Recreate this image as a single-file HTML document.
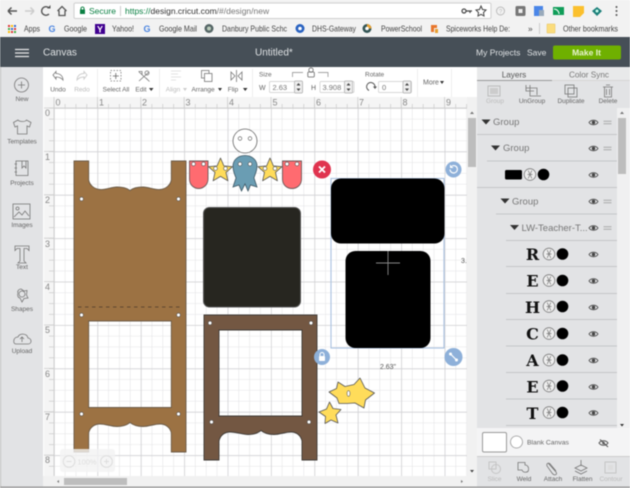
<!DOCTYPE html>
<html><head><meta charset="utf-8"><style>
html,body{margin:0;padding:0;background:#fff;width:630px;height:488px;overflow:hidden}
svg{display:block;font-family:"Liberation Sans",sans-serif;filter:blur(.5px)}
.i{fill:none;stroke:#777;stroke-width:.8}
.t{fill:#666;font-size:6.5px;text-anchor:middle}
.d{fill:#bbb;font-size:6.5px;text-anchor:middle}
.bm{fill:#444;font-size:8.3px}
.r{fill:#888;font-size:9px}
.g{fill:#777;font-size:9.5px}
.L{font-family:"DejaVu Serif",serif;font-weight:bold;font-size:16px;fill:#111;text-anchor:middle}
</style></head><body>
<svg width="630" height="488" viewBox="0 0 630 488" xmlns="http://www.w3.org/2000/svg">
<defs>
<pattern id="mn" width="10.85" height="10.85" patternUnits="userSpaceOnUse" patternTransform="translate(54 108)"><path d="M0 0H10.85M0 0V10.85" stroke="#e3e3e5" stroke-width="1.1" fill="none"/></pattern>
<pattern id="mj" width="43.4" height="43.4" patternUnits="userSpaceOnUse" patternTransform="translate(54 108)"><path d="M0 0H43.4M0 0V43.4" stroke="#cfcfd2" stroke-width="1.4" fill="none"/></pattern>
<pattern id="tx" width="10.85" height="11" patternUnits="userSpaceOnUse" patternTransform="translate(54 97)"><path d="M0 7V11" stroke="#aaa" stroke-width=".8"/></pattern>
<pattern id="ty" width="11" height="10.85" patternUnits="userSpaceOnUse" patternTransform="translate(44 108)"><path d="M5 0H10" stroke="#aaa" stroke-width=".8"/></pattern>
<g id="eye"><path d="M-4.5 0C-2.5-3 2.5-3 4.5 0C2.5 3-2.5 3-4.5 0Z" fill="none" stroke="#555" stroke-width=".9"/><circle r="1.7" fill="#444"/></g>
<g id="eq"><path d="M-4-1.2H4M-4 1.2H4" stroke="#aaa" stroke-width="1"/></g>
<g id="tri"><path d="M-4.5-2.5H4.5L0 2.5Z" fill="#333"/></g>
<g id="cc"><circle r="5.8" fill="#eee" stroke="#777" stroke-width=".8"/><path d="M-1.800-4L1.800 4M1.800-4L-1.800 4M-2.500 0H2.500" stroke="#777" stroke-width=".7"/><circle cx="13.500" r="5.800" fill="#000"/></g>
<g id="spin"><rect x="-4" y="-6" width="8" height="12" rx="1" fill="#eee" stroke="#aaa" stroke-width=".7"/><path d="M-2-1.5L0-4L2-1.5ZM-2 1.5L0 4L2 1.5Z" fill="#444"/></g>
<path id="star" d="M0-12.5L3.4-4.6L12-3.8L5.5 1.9L7.4 10.3L0 5.9L-7.4 10.3L-5.5 1.9L-12-3.8L-3.4-4.6Z" stroke-linejoin="round"/>
<g id="hole"><circle r="1.9" fill="#fff" stroke="#555" stroke-width=".6"/></g>
</defs>

<!-- browser chrome -->
<rect width="630" height="37" fill="#f2f2f2"/>
<path d="M8 11H17M8 11L11.500 7.500M8 11L11.500 14.500" stroke="#555" stroke-width="1.500" fill="none"/>
<path d="M25 11H34M34 11L30.500 7.500M34 11L30.500 14.500" stroke="#ccc" stroke-width="1.500" fill="none"/>
<path d="M49 8A4.300 4.300 0 1 0 49 14" stroke="#555" stroke-width="1.400" fill="none"/><path d="M47 8.500H50.500V5Z" fill="#555"/>
<path d="M57.500 11L62 6.500L66.500 11M59 10.500V15.500H65V10.500" stroke="#555" stroke-width="1.300" fill="none"/>
<rect x="74" y="3" width="417" height="15.500" rx="1.500" fill="#fff" stroke="#d0d0d0"/>
<rect x="80" y="9.500" width="5" height="4.500" fill="#0b8043"/><path d="M81 9.500V8A1.600 1.600 0 0 1 84 8V9.500" stroke="#0b8043" fill="none"/>
<text x="89" y="14" font-size="8.500" fill="#0b8043">Secure</text>
<path d="M120.500 6V16" stroke="#ccc"/>
<text x="125" y="14" font-size="8.500" fill="#0b8043">https://<tspan fill="#333">design.cricut.com</tspan><tspan fill="#777">/#/design/new</tspan></text>
<circle cx="464" cy="11" r="2" fill="none" stroke="#444" stroke-width="1.200"/><path d="M466 11H472M470 11V13" stroke="#444" stroke-width="1.200"/>
<path d="M481 6L482.500 9.500L486 10L483.500 12.500L484 16L481 14.300L478 16L478.500 12.500L476 10L479.500 9.500Z" fill="none" stroke="#444"/>
<circle cx="500.500" cy="11" r="4" fill="none" stroke="#bbb"/><text x="500.500" y="13.500" font-size="6" fill="#bbb" text-anchor="middle">?</text>
<rect x="515.500" y="6" width="10" height="10" rx="1.500" fill="#777"/><rect x="518.500" y="9" width="4" height="4" fill="#eee"/>
<rect x="534" y="6" width="9" height="10" fill="#4a86e8"/><rect x="539" y="10" width="5" height="6" fill="#9ab"/>
<path d="M553 7H564V15H553Z" fill="#0f9d58"/><path d="M554 9A5 5 0 0 1 559 14" stroke="#fff" fill="none"/>
<path d="M573 6H584V13L580 17H573Z" fill="#fbc02d"/>
<path d="M597 7L602 11L597 16L592 11Z" fill="#1b7f79"/><circle cx="597" cy="11" r="1.500" fill="#cfe"/>
<g fill="#555"><circle cx="616.500" cy="7" r="1"/><circle cx="616.500" cy="11" r="1"/><circle cx="616.500" cy="15" r="1"/></g>

<!-- bookmarks -->
<g fill="#d33"><rect x="8" y="25" width="2" height="2"/><rect x="8" y="28" width="2" height="2" fill="#4a4"/><rect x="8" y="31" width="2" height="2" fill="#fb0"/><rect x="11" y="25" width="2" height="2" fill="#fb0"/><rect x="11" y="28" width="2" height="2" fill="#36c"/><rect x="11" y="31" width="2" height="2"/><rect x="14" y="25" width="2" height="2" fill="#36c"/><rect x="14" y="28" width="2" height="2"/><rect x="14" y="31" width="2" height="2" fill="#4a4"/></g>
<text x="24" y="31.500" class="bm" textLength="16" lengthAdjust="spacingAndGlyphs">Apps</text>
<g font-size="9" font-weight="bold"><text x="48.500" y="32" fill="#4a84e0">G</text><text x="143.500" y="32" fill="#4a84e0">G</text></g>
<text x="64" y="31.500" class="bm" textLength="23" lengthAdjust="spacingAndGlyphs">Google</text>
<rect x="95" y="24" width="10" height="10" fill="#400090"/><text x="97" y="32.500" font-size="9" font-weight="bold" fill="#fff">Y</text>
<text x="112" y="31.500" class="bm" textLength="22" lengthAdjust="spacingAndGlyphs">Yahoo!</text>
<text x="159" y="31.500" class="bm" textLength="38" lengthAdjust="spacingAndGlyphs">Google Mail</text>
<circle cx="209" cy="28.500" r="4.500" fill="#566"/><circle cx="209" cy="28.500" r="2" fill="#bcb"/>
<text x="222" y="31.500" class="bm" textLength="65" lengthAdjust="spacingAndGlyphs">Danbury Public Schc</text>
<circle cx="300" cy="28.500" r="4.500" fill="#2a62c0"/><circle cx="300" cy="28.500" r="1.800" fill="#fff"/>
<text x="312" y="31.500" class="bm" textLength="44" lengthAdjust="spacingAndGlyphs">DHS-Gateway</text>
<circle cx="367" cy="28.500" r="4.500" fill="#355"/><path d="M367 24A4.500 4.500 0 0 1 371.500 28.500H367Z" fill="#e8a030"/><circle cx="367" cy="28.500" r="1.800" fill="#fff"/>
<text x="381" y="31.500" class="bm" textLength="41" lengthAdjust="spacingAndGlyphs">PowerSchool</text>
<path d="M431 25H437V28H434V32H431Z" fill="#e8762c"/><path d="M435 29H438V33H435Z" fill="#e8a030"/>
<text x="446" y="31.500" class="bm" textLength="64" lengthAdjust="spacingAndGlyphs">Spiceworks Help De:</text>
<text x="528" y="31.500" class="bm">»</text>
<path d="M539.500 23V34" stroke="#ccc"/>
<path d="M547 24H555V33H547Z" fill="#fbdc7c" stroke="#e6c25a" stroke-width=".5"/>
<text x="563" y="31.500" class="bm" textLength="55" lengthAdjust="spacingAndGlyphs">Other bookmarks</text>

<!-- header -->
<rect y="37" width="630" height="30" fill="#464f57"/>
<path d="M15 49.500H29M15 53H29M15 56.500H29" stroke="#e8e8e8" stroke-width="1.300"/>
<text x="43" y="55.500" font-size="10" fill="#dfe2e4">Canvas</text>
<text x="255" y="55.500" font-size="10" fill="#dfe2e4">Untitled*</text>
<text x="476" y="55.500" font-size="8.500" fill="#dfe2e4">My Projects</text>
<text x="527" y="55.500" font-size="8.500" fill="#dfe2e4">Save</text>
<rect x="553" y="45.500" width="68" height="14" rx="2" fill="#6fb000"/>
<text x="586.500" y="55.300" font-size="8.500" font-weight="bold" fill="#e8f3d0" text-anchor="middle">Make It</text>

<!-- toolbar -->
<rect x="43" y="67" width="434" height="30" fill="#fff"/>
<path d="M97.500 69V97M159.500 69V97M252.500 69V97M417.500 69V97M451.500 69V97" stroke="#eee"/>
<rect y="67" width="43" height="421" fill="#e2e3e5"/>
<rect width="1" y="67" height="421" fill="#bbb"/>

<path class="i" d="M53 75L56 71.500V73.500C60 73.500 63 76 63 80C61 77.500 59 77 56 77V79Z"/>
<path fill="none" stroke="#ccc" stroke-width=".9" d="M87 75L84 71.500V73.500C80 73.500 77 76 77 80C79 77.500 81 77 84 77V79Z"/>
<text x="58" y="91.500" class="t">Undo</text><text x="82" y="91.500" class="d">Redo</text>
<rect x="110.500" y="70.500" width="10.500" height="10.500" fill="none" stroke="#777" stroke-width=".8" stroke-dasharray="1.500 1.500"/><path d="M115.800 73V79M112.800 76H118.800" stroke="#666" stroke-width=".8"/>
<text x="116" y="91.500" class="t">Select All</text>
<path class="i" d="M139 72L149 81M149 72L139 81M138.500 71.500L142 71.500L142 75M146 78L149.500 81.500"/><circle cx="147" cy="73" r="2" class="i"/>
<text x="141" y="91.500" class="t">Edit</text><path d="M149 88H153.500L151.200 91Z" fill="#333"/>
<path d="M171 71H181M171 74H178M171 77H181M171 80H176" stroke="#e3e3e3"/>
<text x="173" y="91.500" class="d">Align</text><path d="M183 88H187L185 91Z" fill="#ccc"/>
<rect x="201.500" y="70.500" width="7.500" height="7.500" class="i"/><rect x="204.500" y="73.500" width="7.500" height="8" fill="#fff" stroke="#777" stroke-width=".8"/>
<text x="203" y="91.500" class="t">Arrange</text><path d="M218 88H222L220 91Z" fill="#333"/>
<path class="i" d="M236.500 70V82M231 72L235 76L231 80ZM242 72L238 76L242 80Z"/>
<text x="233" y="91.500" class="t">Flip</text><path d="M243 88H247.500L245.200 91Z" fill="#333"/>
<text x="259" y="76.500" font-size="6.500" fill="#666">Size</text>
<path d="M292.500 77V72.500H303M318 72.500H328V77" fill="none" stroke="#888" stroke-width=".7"/>
<rect x="307.800" y="72" width="6.500" height="5" rx="1" fill="none" stroke="#666" stroke-width=".8"/><circle cx="311" cy="70" r="2.200" fill="none" stroke="#666" stroke-width=".8"/>
<text x="259" y="90" font-size="7" fill="#666">W</text>
<rect x="269.500" y="81.500" width="33" height="11" rx="1" fill="#fff" stroke="#ccc" stroke-width=".7"/>
<text x="272.500" y="90" font-size="7.500" fill="#777">2.63</text><use href="#spin" x="298.500" y="87"/>
<text x="311" y="90" font-size="7" fill="#666">H</text>
<rect x="320" y="81.500" width="34" height="11" rx="1" fill="#fff" stroke="#ccc" stroke-width=".7"/>
<text x="322.500" y="90" font-size="7.500" fill="#777">3.908</text><use href="#spin" x="348.500" y="87"/>
<text x="365" y="76.500" font-size="6.500" fill="#666">Rotate</text>
<path d="M369 90.500A4.200 4.200 0 1 1 375 87" fill="none" stroke="#555" stroke-width="1"/><path d="M373 86.500H377L375 89Z" fill="#555"/>
<rect x="378.500" y="81.500" width="33" height="11" rx="1" fill="#fff" stroke="#ccc" stroke-width=".7"/>
<text x="382" y="90" font-size="7.500" fill="#777">0</text><use href="#spin" x="407" y="87"/>
<text x="423" y="84.500" font-size="7" fill="#666">More</text><path d="M440 81H444L442 84Z" fill="#333"/>

<!-- sidebar -->
<circle cx="21.500" cy="85" r="7" class="i"/><path class="i" d="M21.500 81.500V88.500M18 85H25"/>
<text x="22" y="101" class="t">New</text>
<path class="i" d="M18 120L13.500 122.500L15 127L17.500 126V134H27V126L29.500 127L31 122.500L26.500 120C25.500 122 19.500 122 18 120Z"/>
<text x="22" y="143.500" class="t">Templates</text>
<rect x="16" y="161" width="12" height="14.500" class="i"/><path class="i" d="M14.500 164H17M14.500 168H17M14.500 172H17M22 161V168L24 166L26 168V161"/>
<text x="22" y="185" class="t">Projects</text>
<rect x="13" y="204" width="17" height="15" class="i"/><circle cx="17.500" cy="208.500" r="1.500" class="i"/><path class="i" d="M14 217L19 212L22 215L25 211L29 216"/>
<text x="22" y="227" class="t">Images</text>
<path class="i" d="M15 246H29V250.500L27 248.500H24V261L26 263H18L20 261V248.500H17L15 250.500Z"/>
<text x="22" y="269" class="t">Text</text>
<path class="i" d="M21 289L24 291L27 290.500L26.500 295L28 298L24 298.500L22 302L20 298C18 298 17 295 18 293C17 291 19 289 21 289Z"/><circle cx="22" cy="294" r="3" class="i"/>
<text x="22" y="311" class="t">Shapes</text>
<path class="i" d="M16 344H28C32 344 32 338.500 28 338C27 333 19 333 18 337C13 337 12.500 344 16 344Z"/><path class="i" d="M22 342V337M20 339L22 337L24 339"/>
<text x="22" y="353" class="t">Upload</text>

<!-- canvas & rulers -->
<rect x="43" y="97" width="424" height="379" fill="#fff"/>
<rect x="54" y="108" width="413" height="368" fill="url(#mn)"/>
<rect x="54" y="108" width="413" height="368" fill="url(#mj)"/>
<rect x="44" y="97" width="423" height="11" fill="#f5f5f5"/>
<rect x="44" y="97" width="10" height="379" fill="#f5f5f5"/>
<rect x="54" y="97" width="413" height="11" fill="url(#tx)"/>
<rect x="44" y="108" width="10" height="368" fill="url(#ty)"/>
<path d="M54 97V476M97.400 97V108M140.800 97V108M184.200 97V108M227.600 97V108M271 97V108M314.400 97V108M357.800 97V108M401.200 97V108M444.600 97V108M44 108H467M44 151.400H54M44 194.800H54M44 238.200H54M44 281.600H54M44 325H54M44 368.400H54M44 411.800H54M44 455.200H54" stroke="#ccc" stroke-width=".8"/>
<g class="r">
<text x="55.500" y="105.500">0</text><text x="99" y="105.500">1</text><text x="142" y="105.500">2</text><text x="185.500" y="105.500">3</text><text x="229" y="105.500">4</text><text x="272.500" y="105.500">5</text><text x="316" y="105.500">6</text><text x="359" y="105.500">7</text><text x="402.500" y="105.500">8</text><text x="446" y="105.500">9</text>
<text x="45" y="116">0</text><text x="45" y="160">1</text><text x="45" y="203">2</text><text x="45" y="247">3</text><text x="45" y="290">4</text><text x="45" y="333">5</text><text x="45" y="377">6</text><text x="45" y="420">7</text><text x="45" y="463">8</text>
</g>

<!-- brown board -->
<path fill-rule="evenodd" fill="#9c7243" stroke="#6b5b48" stroke-width=".9" d="M74 161H88.700V180C89.500 185 94 189 100 189.500C106 190 111 187 117 187C123 187 127 188 130 190.500C133 188 137 187 143 187C149 187 154 190 160 189.500C166 189 170.500 185 171.300 180V161H186V452H171.300V433C170.500 428 166 424 160 424C154 424 149 426.500 143 426.500C137 426.500 133 425 130 422.500C127 425 123 426.500 117 426.500C111 426.500 106 424 100 424C94 424 89.500 428 88.700 433V452H74ZM88.700 321V407.500H171.300V321Z"/>
<path d="M78 307H183" stroke="#4a3a28" stroke-width=".8" stroke-dasharray="3.500 3.500"/>
<use href="#hole" x="81.500" y="199"/><use href="#hole" x="178.500" y="199"/><use href="#hole" x="81.500" y="315"/><use href="#hole" x="178.500" y="315"/><use href="#hole" x="81.500" y="414"/><use href="#hole" x="178.500" y="414"/>

<!-- frame -->
<path fill-rule="evenodd" fill="#735742" stroke="#3e3a36" stroke-width=".9" d="M204 315H317V460H302V441C301 436 297 432 291 432C285 432 280 434.500 274 434.500C268 434.500 264 433 261 430.500C258 433 254 434.500 248 434.500C242 434.500 237 432 230 432C224 432 220 436 219 441V460H204ZM219 330V416H302V330Z"/>
<use href="#hole" x="210" y="323"/><use href="#hole" x="311" y="323"/><use href="#hole" x="211.500" y="422"/><use href="#hole" x="309" y="422"/>

<rect x="203.500" y="207.500" width="97" height="99.500" rx="6" fill="#272620" stroke="#555"/>

<!-- head/ribbon/tags -->
<circle cx="245" cy="141" r="12" fill="#fff" stroke="#666" stroke-width=".8"/>
<circle cx="240" cy="138.500" r="1.800" fill="#fff" stroke="#555" stroke-width=".6"/><circle cx="250" cy="138.500" r="1.800" fill="#fff" stroke="#555" stroke-width=".6"/>
<path fill="#ff6b70" stroke="#6e5a5a" stroke-width=".9" d="M189.500 161H208V179C208 185 203 188.500 198.700 188.500C194 188.500 189.500 185 189.500 179Z"/>
<path fill="#ff6b70" stroke="#6e5a5a" stroke-width=".9" d="M282.500 161H301.500V179C301.500 185 297 188.500 292 188.500C287 188.500 282.500 185 282.500 179Z"/>
<use href="#hole" x="193.500" y="164"/><use href="#hole" x="203.500" y="164"/><use href="#hole" x="287" y="164"/><use href="#hole" x="297" y="164"/>
<use href="#star" x="220.500" y="170.500" fill="#ffdc5a" stroke="#555" stroke-width=".8"/>
<use href="#star" x="270" y="170.500" fill="#ffdc5a" stroke="#555" stroke-width=".8"/>
<use href="#hole" x="215.500" y="168.500"/><use href="#hole" x="225.500" y="168.500"/><use href="#hole" x="265" y="168.500"/><use href="#hole" x="275" y="168.500"/>
<path fill="#6a9db3" stroke="#3d5663" stroke-width=".8" d="M245 155.500C252 155.500 257 160 257 166C257 172 254.500 175 254 178L257 187L250.500 185L248 191L245 184L241.500 191L239 185L233 187L236 178C235 175 233 172 233 166C233 160 238 155.500 245 155.500Z"/>
<use href="#hole" x="240" y="164"/><use href="#hole" x="250" y="164"/>

<!-- selection -->
<rect x="331" y="178.500" width="113" height="169.500" fill="none" stroke="#a9c1e0" stroke-width="1.100"/>
<rect x="331" y="178.500" width="113.500" height="65" rx="10" fill="#000"/>
<rect x="345.500" y="251" width="85" height="97" rx="10" fill="#000"/>
<path d="M388 251V275M376 263H400" stroke="#888" stroke-width=".9"/>
<circle cx="322" cy="169.500" r="9" fill="#e0344f"/><path d="M319 166.500L325 172.500M325 166.500L319 172.500" stroke="#fff" stroke-width="1.800"/>
<circle cx="453.500" cy="169.500" r="8" fill="#8eb0d9"/><path d="M450 169.500A3.700 3.700 0 1 0 452 166" fill="none" stroke="#fff" stroke-width="1.200"/><path d="M450 164.500V168H453.500Z" fill="#fff"/>
<circle cx="322" cy="357" r="8" fill="#8eb0d9"/><rect x="319" y="356" width="6" height="5" rx=".8" fill="#fff"/><path d="M320 356V354.500A2 2 0 0 1 324 354.500V356" stroke="#fff" fill="none"/>
<circle cx="453.500" cy="357" r="9" fill="#8eb0d9"/><path d="M450.500 354L456.500 360" stroke="#fff" stroke-width="1.200"/><circle cx="450.500" cy="354" r="1.500" fill="#fff"/><circle cx="456.500" cy="360" r="1.500" fill="#fff"/>
<text x="388" y="369" font-size="7" fill="#555" text-anchor="middle">2.63"</text>
<text x="461" y="263" font-size="7" fill="#555">3.</text>

<!-- bottom stars -->
<path fill="#ffdc5a" stroke="#555" stroke-width=".8" stroke-linejoin="round" d="M329 392L336.500 388.500L338 382L345 386.500L354 384.500L360 378L365 388L374.500 393L365.500 400L364 408L355 403L347 403.500L339 403.500L337 398Z"/>
<ellipse cx="348.500" cy="393.500" rx="1.500" ry="2.800" fill="#fff" stroke="#555" stroke-width=".6"/>
<path fill="#ffdc5a" stroke="#555" stroke-width=".8" stroke-linejoin="round" d="M319 412L326.500 409L329.500 402L333 408.500L341 409.500L336 415L338 423L331 420L325 423.500L325.500 416.500Z"/>

<!-- zoom widget -->
<rect x="60" y="449" width="55" height="23" rx="3" fill="#f2f2f3" opacity=".8"/>
<circle cx="69" cy="461.500" r="5.800" fill="none" stroke="#ddd"/><path d="M66.500 461.500H71.500" stroke="#ddd"/>
<text x="87" y="464.500" font-size="7.500" fill="#ddd" text-anchor="middle">100%</text>
<circle cx="106.500" cy="461.500" r="5.800" fill="none" stroke="#ddd"/><path d="M104 461.500H109M106.500 459V464" stroke="#ddd"/>

<!-- scrollbars -->
<rect x="43" y="476" width="434" height="12" fill="#f1f1f1"/>
<rect x="64" y="478" width="63" height="7" fill="#bdbdbd"/>
<path d="M59 480V483L57 481.500Z" fill="#777"/><path d="M461 480V483L463 481.500Z" fill="#777"/>
<rect x="467" y="97" width="10" height="379" fill="#f1f1f1"/>
<rect x="468" y="118" width="8" height="49" fill="#bdbdbd"/>
<path d="M470 114H474L472 111.500Z" fill="#777"/><path d="M470 470H474L472 472.500Z" fill="#444"/>

<!-- right panel -->
<rect x="477" y="67" width="153" height="421" fill="#e2e3e5"/>
<rect x="477" y="67" width="153" height="13" fill="#e8e9ea"/>
<text x="514" y="77.500" font-size="8.200" fill="#555" text-anchor="middle">Layers</text>
<text x="589" y="77.500" font-size="8.200" fill="#777" text-anchor="middle">Color Sync</text>
<path d="M477 80.500H552" stroke="#999"/><path d="M552 80.500H630" stroke="#d5d5d5"/>
<path d="M477 108.500H630" stroke="#d0d0d0"/>
<rect x="488" y="86" width="12" height="10" fill="none" stroke="#bbb"/><rect x="490" y="88" width="8" height="6" fill="#ccc"/>
<text x="495" y="103" class="d">Group</text>
<path class="i" d="M526 88H537V95M530 85V96H541M526 85V91H534" />
<text x="532" y="103" class="t">UnGroup</text>
<rect x="565" y="85" width="9" height="9" class="i"/><rect x="568" y="88" width="9" height="9" class="i"/>
<text x="571" y="103" class="t">Duplicate</text>
<path class="i" d="M603 87H613M604.500 87V97H611.500V87M606 85H610M606.500 89V95M609.500 89V95"/>
<text x="608" y="103" class="t">Delete</text>

<!-- layer list -->
<rect x="477" y="108" width="140" height="320" fill="#e2e3e5"/>
<rect x="617" y="108" width="13" height="320" fill="#f0f0f1"/>
<rect x="618" y="118" width="8" height="56" fill="#bdbdbd"/>
<path d="M620 114H624L622 111.500Z" fill="#777"/><path d="M620 424H624L622 426.500Z" fill="#333"/>
<path d="M477 134.500H617M487 161H617M477 187.500H617M496 214H617M506 240.500H617M506 266.500H617M506 293.500H617M506 319.500H617M506 346H617M506 372.500H617M506 399H617M506 425.500H617" stroke="#c5c6c8"/>
<use href="#tri" x="486" y="122"/><text x="493" y="125" class="g">Group</text><use href="#eye" x="593.500" y="122.500"/><use href="#eq" x="607.500" y="122.500"/>
<use href="#tri" x="495.500" y="148"/><text x="503" y="151" class="g">Group</text><use href="#eye" x="593.500" y="148.500"/><use href="#eq" x="607.500" y="148.500"/>
<rect x="505" y="170" width="17" height="9.500" rx="1.500" fill="#000"/><use href="#cc" x="530" y="174.500"/><use href="#eye" x="593.500" y="175"/>
<use href="#tri" x="505" y="201"/><text x="512" y="204.500" class="g">Group</text><use href="#eye" x="593.500" y="201.500"/><use href="#eq" x="607.500" y="201.500"/>
<use href="#tri" x="514.500" y="227.500"/><text x="521.500" y="231" class="g">LW-Teacher-T...</text><use href="#eye" x="593.500" y="228"/><use href="#eq" x="607.500" y="228"/>
<text x="532.500" y="260" class="L">R</text><use href="#cc" x="549" y="254"/><use href="#eye" x="593.500" y="254.500"/>
<text x="532.500" y="286.500" class="L">E</text><use href="#cc" x="549" y="280.500"/><use href="#eye" x="593.500" y="281"/>
<text x="532.500" y="313" class="L">H</text><use href="#cc" x="549" y="306.500"/><use href="#eye" x="593.500" y="307.500"/>
<text x="532.500" y="339.500" class="L">C</text><use href="#cc" x="549" y="333.500"/><use href="#eye" x="593.500" y="334"/>
<text x="532.500" y="366" class="L">A</text><use href="#cc" x="549" y="360"/><use href="#eye" x="593.500" y="360.500"/>
<text x="532.500" y="392.500" class="L">E</text><use href="#cc" x="549" y="386"/><use href="#eye" x="593.500" y="387"/>
<text x="532.500" y="419" class="L">T</text><use href="#cc" x="549" y="412.500"/><use href="#eye" x="593.500" y="413"/>

<!-- blank canvas row -->
<rect x="477" y="428" width="153" height="28" fill="#f4f4f5"/>
<rect x="482.500" y="432.500" width="24" height="19.500" rx="1.500" fill="#fff" stroke="#999"/>
<circle cx="516.500" cy="442" r="6" fill="#fff" stroke="#999" stroke-width=".8"/>
<text x="527" y="444.500" font-size="6.800" fill="#666">Blank Canvas</text>
<path d="M599 443C601 440 606 440 608 443C606 446 601 446 599 443Z" fill="none" stroke="#555"/><path d="M600 439.500L608 447" stroke="#555"/><circle cx="603.500" cy="443" r="1.300" fill="#555"/>

<!-- bottom tools -->
<rect x="477" y="456" width="153" height="32" fill="#e2e3e5"/>
<path d="M477 456.500H630" stroke="#ccc"/>
<rect x="489" y="462" width="7" height="7" fill="none" stroke="#c5c5c5"/><circle cx="496" cy="469" r="4.500" fill="none" stroke="#c5c5c5"/>
<text x="494.500" y="481" class="d">Slice</text>
<path class="i" d="M518 462.500H525V465C528 465 529 468 528.500 470C528 473 523 473 522 470H518Z"/>
<text x="524" y="481" class="t">Weld</text>
<path class="i" d="M548 463L556 472C558 475 554 476 552 473L547 466C546 463 549 462 551 465L556 471"/>
<text x="553" y="481" class="t">Attach</text>
<path class="i" d="M575 471L581 474L587 471M575 468L581 471L587 468L581 465ZM581 460V466"/>
<text x="582.500" y="481" class="t">Flatten</text>
<rect x="605" y="462" width="11" height="11" fill="none" stroke="#c5c5c5"/><path d="M608 465H613V470H608Z" fill="#ddd"/>
<text x="611" y="481" class="d">Contour</text>
<rect x="0" y="486.500" width="630" height="1.500" fill="#999"/>
</svg>
</body></html>
